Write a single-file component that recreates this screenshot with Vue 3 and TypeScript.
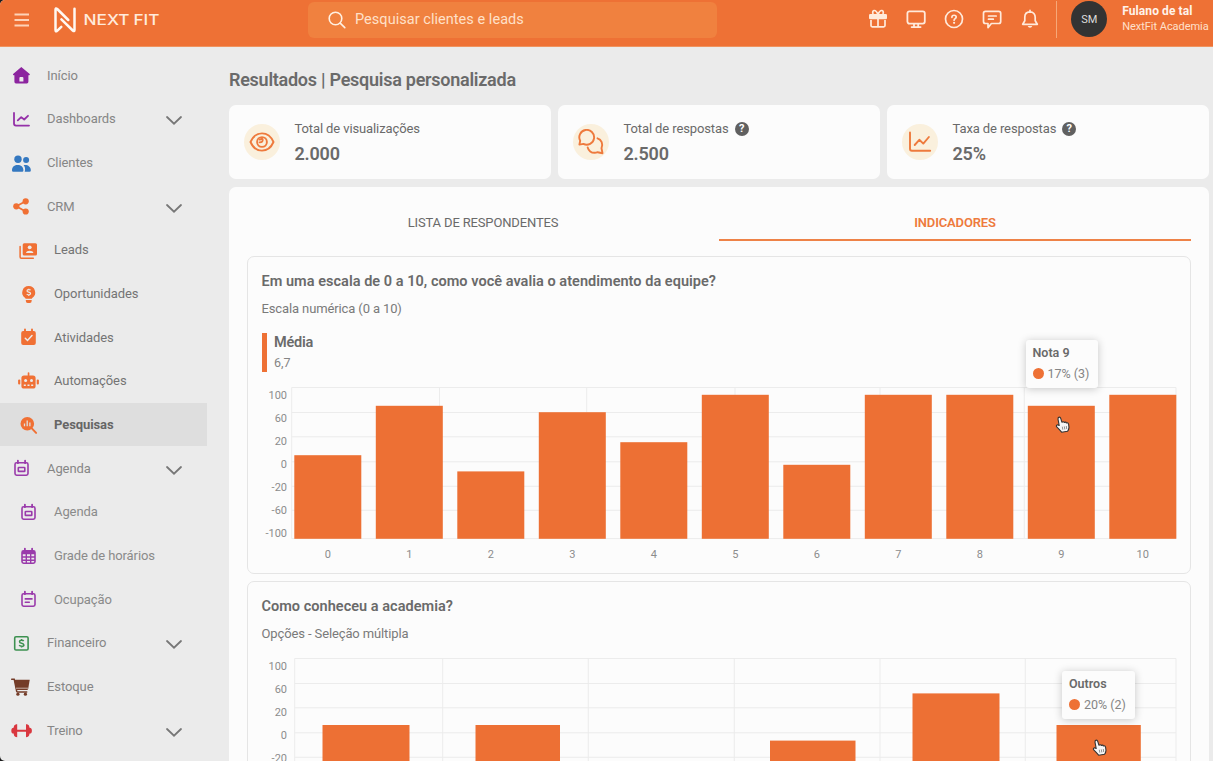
<script setup lang="ts">
interface NavItem {
  label: string
  icon: string
  color: string
  sub?: boolean
  expandable?: boolean
  active?: boolean
  dim?: boolean
}

const calendarFrame =
  '<rect x="6" y="6.8" width="13" height="12.4" rx="1.6" fill="none" stroke="currentColor" stroke-width="1.6"/><path d="M8.9 4.6v2.6M16.1 4.6v2.6" stroke="currentColor" stroke-width="1.8" stroke-linecap="round"/>'

const icons: Record<string, string> = {
  home: '<path fill="currentColor" fill-rule="evenodd" d="M12.3 4.1 20.7 11q.5.9-.5 1.2H19.4v6.6q0 1.6-1.6 1.6H7q-1.6 0-1.6-1.6v-6.6H4.6q-1-.3-.5-1.2ZM10.4 18.6h4v-3.6q0-1-1-1h-2q-1 0-1 1Z"/>',
  trend: '<path fill="none" stroke="currentColor" stroke-width="1.8" stroke-linecap="round" stroke-linejoin="round" d="M5 6v10.6q0 2 2 2h13M8.8 13.4l3.4-3.3 3 2.4L19 8.8"/>',
  users: '<g fill="currentColor"><circle cx="9" cy="8.2" r="3.7"/><circle cx="17.1" cy="9" r="3"/><path d="M3 19.2c0-3.600 2.600-5.300 5.700-5.300s5.700 1.700 5.700 5.300v.4q0 1.200-1.200 1.200H4.200q-1.200 0-1.200-1.200zM14.600 14.100c3.800-.8 7.200 1.400 7.200 5v.5q0 1.200-1.200 1.200h-4.900c.8-2.500.400-4.900-1.100-6.700z"/></g>',
  share: '<g fill="currentColor"><circle cx="7.300" cy="12.300" r="3.100"/><circle cx="16.700" cy="7.300" r="3.100"/><circle cx="16.700" cy="17.500" r="3.100"/><path d="M16.700 7.300 7.300 12.300l9.400 5.200" fill="none" stroke="currentColor" stroke-width="1.800"/></g>',
  leads: '<rect x="6.700" y="5.200" width="14.300" height="12.400" rx="1.500" fill="currentColor"/><path d="M4.100 8.600v10.400q0 1.200 1.200 1.200h12" fill="none" stroke="currentColor" stroke-width="1.500" stroke-linecap="round"/><circle cx="13.700" cy="9.300" r="1.900" fill="#ebebeb"/><path d="M10 14.900c.2-3 7.200-3 7.400 0z" fill="#ebebeb"/>',
  bulb: '<path fill="currentColor" d="M12.700 4.100a6.400 6.400 0 0 1 3.500 11.800q-.4.300-.4.900h-6.200q0-.6-.4-.9A6.400 6.400 0 0 1 12.700 4.100zM9.800 17.900h5.900v.9q0 2.300-1.900 2.300h-2.100q-1.900 0-1.900-2.300z"/><path d="M14.500 8.300c-.5-.9-3.500-1-3.500.6 0 1.700 3.600.9 3.600 2.700 0 1.700-3.200 1.500-3.800.4M12.800 6.700v1M12.800 12.900v1" fill="none" stroke="#ebebeb" stroke-width="1.200"/>',
  check: '<path d="M9 4.500v3M16 4.500v3" stroke="currentColor" stroke-width="1.900" stroke-linecap="round"/><rect x="5.200" y="5.900" width="14.600" height="14.100" rx="2" fill="currentColor"/><path d="m9.300 13.200 2.200 2.300 4.500-4.900" fill="none" stroke="#ebebeb" stroke-width="1.500" stroke-linecap="round"/>',
  robot: '<g fill="currentColor"><rect x="5.400" y="6.500" width="14.200" height="13" rx="2.600"/><rect x="11.700" y="3.200" width="1.700" height="4" rx=".8"/><rect x="2.100" y="10.600" width="2.200" height="5" rx="1"/><rect x="20.700" y="10.600" width="2.200" height="5" rx="1"/></g><g fill="#ebebeb"><circle cx="9.600" cy="11.400" r="1.500"/><circle cx="15.500" cy="11.400" r="1.500"/><path d="M7.800 15.400h2v1.500h-2zM11.500 15.400h2v1.500h-2zM15.200 15.400h2v1.500h-2z"/></g>',
  survey: '<circle cx="11.300" cy="10.700" r="6.800" fill="currentColor"/><path d="m15.800 15.400 4.300 4.500" stroke="currentColor" stroke-width="2" stroke-linecap="round"/><path d="M8.500 10.400v2.900M11.200 7.600v5.700M13.900 9.400v3.900" stroke="#dedede" stroke-width="1.300"/>',
  agenda: calendarFrame + '<rect x="9.300" y="11.500" width="6.500" height="3.900" rx=".5" fill="none" stroke="currentColor" stroke-width="1.600"/>',
  grid: calendarFrame + '<path d="M6 9.600h13M6 13h13M6 16.300h13M10.300 9.500v9.700M14.700 9.500v9.700" stroke="currentColor" stroke-width="1.400"/><path d="M6 8h13" stroke="currentColor" stroke-width="2.200"/>',
  notes: calendarFrame + '<path d="M9.300 11.900h6.700M9.300 15.300h4" stroke="currentColor" stroke-width="1.600" stroke-linecap="round"/>',
  money: '<rect x="5.700" y="5.700" width="13.400" height="13.300" rx="1.300" fill="none" stroke="currentColor" stroke-width="1.600"/><path d="M14.700 10.100c-.7-1.100-4.200-1.100-4.200.6 0 2.100 4.400 1 4.400 3.200 0 1.800-3.900 1.700-4.700.3M12.600 7.900v1.500M12.600 15v1.600" fill="none" stroke="currentColor" stroke-width="1.500"/>',
  cart: '<path d="M2.700 4.200h2.500l2.500 12.200q.2.700 1 .7h9" fill="none" stroke="currentColor" stroke-width="1.500" stroke-linecap="round"/><path d="M5.200 4.800h15.500l-1.500 9q-.2 1.200-1.300 1.200H7.300z" fill="currentColor"/><path d="M7 13.200h12" stroke="#c4aea5" stroke-width="1"/><circle cx="8.900" cy="19.200" r="1.600" fill="currentColor"/><circle cx="16.400" cy="19.200" r="1.600" fill="currentColor"/>',
  barbell: '<path d="M8.200 6.300C4.800 6.300 5 8.700 4.600 9.800q-2.300 0-2.300 2.900t2.300 2.900c.4 1.200.2 3.700 3.600 3.700zM17 6.300c3.400 0 3.200 2.400 3.600 3.500q2.300 0 2.300 2.900t-2.300 2.900c-.4 1.200-.2 3.700-3.600 3.700z" fill="currentColor"/><path d="M8 12.800h9.200" stroke="currentColor" stroke-width="2"/>',
  gift: '<g fill="none" stroke="currentColor" stroke-width="1.700"><path d="M5 13v5.600q0 1.300 1.300 1.300h11.400q1.300 0 1.300-1.300V13M12 8v12"/><path d="M12 7.500C9.500 1.200 5.400 3.400 7.100 7M12 7.500c2.500-6.300 6.600-4.100 4.900-.5"/></g><rect x="3" y="7" width="18" height="5.200" rx="1.300" fill="currentColor"/>',
  screen: '<g fill="none" stroke="currentColor" stroke-width="1.800" stroke-linecap="round"><rect x="3.400" y="4.300" width="17.400" height="12.300" rx="2"/><path d="M10 17v2.500M14.200 17v2.500M7.600 20.100h9"/></g>',
  help: '<circle cx="12" cy="12" r="8.500" fill="none" stroke="currentColor" stroke-width="1.700"/><path d="M9.900 10.300c0-2.800 4.300-2.600 4.300-.2 0 1.500-2.100 1.500-2.100 3.100" fill="none" stroke="currentColor" stroke-width="1.700" stroke-linecap="round"/><circle cx="12.100" cy="15.800" r="1.100" fill="currentColor"/>',
  chat: '<path d="M5.500 4.300h13.200q2 0 2 2v8.200q0 2-2 2h-7.300L8 20.600v-4.100H5.500q-2 0-2-2V6.300q0-2 2-2zM8.500 9h7.700M8.500 12.200h4.800" fill="none" stroke="currentColor" stroke-width="1.700" stroke-linecap="round" stroke-linejoin="round"/>',
  bell: '<path d="M12 3.300v1.500M12 4.900c-3.400 0-5.200 2.400-5.200 5.400v3.400L4.700 17.300h14.600l-2.100-3.600v-3.400c0-3-1.800-5.400-5.200-5.400z" fill="none" stroke="currentColor" stroke-width="1.700" stroke-linecap="round" stroke-linejoin="round"/><path d="M9.700 19.100h4.600q-.6 1.700-2.300 1.700t-2.300-1.700z" fill="currentColor"/>',
}

const nav: NavItem[] = [
  { label: 'Início', icon: 'home', color: '#8c259f' },
  { label: 'Dashboards', icon: 'trend', color: '#9430a8', expandable: true },
  { label: 'Clientes', icon: 'users', color: '#3478c0' },
  { label: 'CRM', icon: 'share', color: '#f07034', expandable: true },
  { label: 'Leads', icon: 'leads', color: '#f07034', sub: true },
  { label: 'Oportunidades', icon: 'bulb', color: '#f07034', sub: true },
  { label: 'Atividades', icon: 'check', color: '#f07034', sub: true },
  { label: 'Automações', icon: 'robot', color: '#f07034', sub: true },
  { label: 'Pesquisas', icon: 'survey', color: '#f07034', sub: true, active: true },
  { label: 'Agenda', icon: 'agenda', color: '#9a3bab', expandable: true },
  { label: 'Agenda', icon: 'agenda', color: '#9a3bab', sub: true, dim: true },
  { label: 'Grade de horários', icon: 'grid', color: '#9a3bab', sub: true, dim: true },
  { label: 'Ocupação', icon: 'notes', color: '#9a3bab', sub: true, dim: true },
  { label: 'Financeiro', icon: 'money', color: '#3d9150', expandable: true },
  { label: 'Estoque', icon: 'cart', color: '#743c28' },
  { label: 'Treino', icon: 'barbell', color: '#d9373f', expandable: true },
]

const tools = ['gift', 'screen', 'help', 'chat', 'bell']

const ticks = ['100', '60', '20', '0', '-20', '-60', '-100']
const tickY = (i: number) => 11.8 + i * 23.03

// Plot geometry, in chart units (1 unit = 1 px)
const rowLines = [0.5, 25.5, 49.8, 74.8, 99.3, 123.3, 151.6]
const scoreCols = [43.7, 191.5, 338.7, 487, 632, 776.3, 928]
const scoreHeights = [83.6, 133, 67.4, 126.6, 96.6, 144, 74, 144, 144, 133, 144]
const scoreX = (i: number) => 46.3 + i * 81.5

const sourceCols = [46.7, 194.7, 340.3, 486.3, 632, 777.3, 928]
const sourceBars = [
  { x: 74.5, w: 87, y: 67 },
  { x: 227.5, w: 84.5, y: 67 },
  { x: 522, w: 85.5, y: 82.6 },
  { x: 664.5, w: 87, y: 35.4 },
  { x: 808.5, w: 84.3, y: 67 },
]
</script>

<template>
  <div class="app">
    <header class="topbar">
      <svg class="burger" viewBox="0 0 16 14"><path d="M0.500 1.500h14.500M0.500 7h14.500M0.500 12.500h14.500" /></svg>
      <svg class="logo" viewBox="0 0 108 28">
        <path class="mark" d="M14.300 14 3.200 3Q1.500 1.600 1.500 3.800V24q0 2.200 1.600.8L7.300 20.800M7.400 13.300 18.800 24.500q1.700 1.500 1.700-.6V2.700" />
        <text x="29.500" y="18.800" textLength="46" lengthAdjust="spacingAndGlyphs">NEXT</text>
        <text x="79.500" y="18.800" textLength="26" lengthAdjust="spacingAndGlyphs">FIT</text>
      </svg>
      <div class="search">
        <svg viewBox="0 0 18 18"><circle cx="7.500" cy="7.500" r="6.300" /><path d="m12.200 12.200 4.600 4.400" /></svg>
        <span>Pesquisar clientes e leads</span>
      </div>
      <div class="tools">
        <svg v-for="t in tools" :key="t" viewBox="0 0 24 24" v-html="icons[t]"></svg>
      </div>
      <div class="account">
        <div class="avatar">SM</div>
        <div class="who">
          <strong>Fulano de tal</strong>
          <span>NextFit Academia</span>
        </div>
      </div>
    </header>

    <div class="body">
      <nav class="sidebar">
        <div
          v-for="(item, i) in nav"
          :key="i"
          class="item"
          :class="{ sub: item.sub, active: item.active, dim: item.dim }"
        >
          <svg class="ico" viewBox="0 0 24 24" :style="{ color: item.color }" v-html="icons[item.icon]"></svg>
          <span>{{ item.label }}</span>
          <svg v-if="item.expandable" class="chev" viewBox="0 0 16 9"><path d="m1 1 7 6.700L15 1" /></svg>
        </div>
      </nav>

      <main class="content">
        <h1>Resultados | Pesquisa personalizada</h1>

        <section class="stats">
          <article class="stat">
            <div class="disc">
              <svg viewBox="0 0 26 26">
                <path d="M1.500 13C6.500 1.500 19.500 1.500 24.500 13C19.500 24.500 6.500 24.500 1.500 13z" />
                <circle cx="13" cy="13" r="4.900" />
                <path d="M13.600 10.300q.6 3.200-3 3.100M10.800 10.600l2.300-1" />
              </svg>
            </div>
            <div class="info">
              <p>Total de visualizações</p>
              <b>2.000</b>
            </div>
          </article>
          <article class="stat">
            <div class="disc">
              <svg viewBox="0 0 26 26">
                <path d="M1.400 15.600 2.200 11.800A7.400 7.400 0 1 1 5.400 14.900z" />
                <path d="M19.500 9.300c3.900 1.200 5.900 5.600 4 9.900l1 5-4.900-1q-1.500.6-3 .6c-3.300 0-6-2.300-6.900-5.400" />
              </svg>
            </div>
            <div class="info">
              <p>Total de respostas <i>?</i></p>
              <b>2.500</b>
            </div>
          </article>
          <article class="stat">
            <div class="disc">
              <svg viewBox="0 0 26 26"><path d="M3 3.500v16.300q0 1.900 1.900 1.900h18.300M7.700 16l4.600-5.200 4 3.800 5.600-6.600" /></svg>
            </div>
            <div class="info">
              <p>Taxa de respostas <i>?</i></p>
              <b>25%</b>
            </div>
          </article>
        </section>

        <section class="panel">
          <div class="tabs">
            <div class="tab">LISTA DE RESPONDENTES</div>
            <div class="tab on">INDICADORES</div>
          </div>

          <article class="card scores">
            <h2>Em uma escala de 0 a 10, como você avalia o atendimento da equipe?</h2>
            <p class="kind">Escala numérica (0 a 10)</p>
            <div class="mean">
              <strong>Média</strong>
              <span>6,7</span>
            </div>
            <svg class="chart" width="942" height="177" viewBox="0 0 942 177">
              <path v-for="y in rowLines" :key="'r' + y" class="rule" :d="`M43.700 ${y}H928`" />
              <path v-for="x in scoreCols" :key="'c' + x" class="rule" :d="`M${x} .5V151.600`" />
              <text v-for="(t, i) in ticks" :key="t" class="tick y" x="39" :y="tickY(i)">{{ t }}</text>
              <g v-for="(h, i) in scoreHeights" :key="'b' + i">
                <rect class="bar" :x="scoreX(i)" :y="151.800 - h" width="67" :height="h" />
                <text class="tick x" :x="scoreX(i) + 33.500" y="170.700">{{ i }}</text>
              </g>
            </svg>
            <div class="tip nine">
              <strong>Nota 9</strong>
              <span>17% (3)</span>
            </div>
            <svg class="hand h9" viewBox="0 0 15 17">
              <path d="M4.200 9.500 3 3.200Q2.800 1.300 4.200 1.100 5.500 1 5.900 2.800L6.900 6.200Q8.600 5.200 9.300 6.400 10.700 5.600 11.400 6.900 13.200 6.400 13.600 8.300L14 11.400Q13.900 13.400 12.600 15.300L6.600 16.200Q4.600 13.800 1.500 10.700 1 9.100 2.400 8.700z" />
              <path class="fold" d="M7.300 10.700l.5 3M9.300 10.400l.5 3M11.300 10l.4 3" />
            </svg>
          </article>

          <article class="card sources">
            <h2>Como conheceu a academia?</h2>
            <p class="kind">Opções - Seleção múltipla</p>
            <svg class="chart" width="942" height="177" viewBox="0 0 942 177">
              <path v-for="y in rowLines" :key="'r' + y" class="rule" :d="`M46.700 ${y}H928`" />
              <path v-for="x in sourceCols" :key="'c' + x" class="rule" :d="`M${x} .5V151.600`" />
              <text v-for="(t, i) in ticks" :key="t" class="tick y" x="39" :y="tickY(i)">{{ t }}</text>
              <rect v-for="b in sourceBars" :key="b.x" class="bar" :x="b.x" :y="b.y" :width="b.w" :height="151.800 - b.y" />
            </svg>
            <div class="tip others">
              <strong>Outros</strong>
              <span>20% (2)</span>
            </div>
            <svg class="hand ho" viewBox="0 0 15 17">
              <path d="M4.200 9.500 3 3.200Q2.800 1.300 4.200 1.100 5.500 1 5.900 2.800L6.900 6.200Q8.600 5.200 9.300 6.400 10.700 5.600 11.400 6.900 13.200 6.400 13.600 8.300L14 11.400Q13.900 13.400 12.600 15.300L6.600 16.200Q4.600 13.800 1.500 10.700 1 9.100 2.400 8.700z" />
              <path class="fold" d="M7.300 10.700l.5 3M9.300 10.400l.5 3M11.300 10l.4 3" />
            </svg>
          </article>
        </section>
      </main>
    </div>
  </div>
</template>

<style>
html,
body {
  margin: 0;
  background: #1c1c1c;
  overflow: hidden;
}
</style>

<style scoped>
* {
  box-sizing: border-box;
}
.app {
  width: 1213px;
  height: 761px;
  overflow: hidden;
  display: flex;
  flex-direction: column;
  background: #ebebeb;
  border-radius: 5px 0 0 5px;
  font-family: Roboto, 'Liberation Sans', sans-serif;
  color: #6a6a6a;
}
h1,
h2,
p {
  margin: 0;
}

.topbar {
  flex: none;
  height: 47px;
  background: #ee7135;
  border-bottom: 1px solid #ef935f;
  display: flex;
  align-items: flex-start;
  color: #fff3ea;
}
.burger {
  width: 16px;
  height: 14px;
  margin: 12.500px 0 0 13.500px;
  fill: none;
  stroke: #fdd3b8;
  stroke-width: 1.900;
}
.logo {
  width: 108px;
  height: 28px;
  margin: 5.500px 0 0 24.500px;
}
.mark {
  fill: none;
  stroke: #fff8f2;
  stroke-width: 2.500;
  stroke-linecap: round;
  stroke-linejoin: round;
}
.logo text {
  font: 500 14.400px Inter, sans-serif;
  fill: #ffeadb;
}
.search {
  width: 409px;
  height: 36px;
  margin: 1.500px 0 0 146px;
  padding-left: 20px;
  border-radius: 6px;
  background: #f0813f;
  display: flex;
  align-items: center;
  font-size: 14.500px;
  letter-spacing: 0.040px;
  color: #ffe0c8;
}
.search svg {
  width: 18px;
  height: 18px;
  margin-right: 9px;
  fill: none;
  stroke: #fff0e2;
  stroke-width: 1.600;
  stroke-linecap: round;
}
.tools {
  display: flex;
  gap: 14.200px;
  margin: 7px 0 0 148.500px;
  color: #ffeadb;
}
.tools svg {
  width: 24px;
  height: 24px;
}
.account {
  display: flex;
  align-items: center;
  height: 36.500px;
  margin: 1px 0 0 14px;
  padding-left: 14px;
  border-left: 1px solid #f6a878;
}
.avatar {
  width: 36px;
  height: 36px;
  border-radius: 50%;
  background: #333;
  color: #dcdcdc;
  font-size: 11px;
  display: flex;
  align-items: center;
  justify-content: center;
}
.who {
  display: flex;
  flex-direction: column;
  margin-left: 15px;
  white-space: nowrap;
}
.who strong {
  font-size: 12px;
  line-height: 16px;
  letter-spacing: 0.080px;
  font-weight: 700;
}
.who span {
  font-size: 11px;
  line-height: 16px;
  letter-spacing: -0.040px;
  color: #ffe0cb;
}

.body {
  flex: 1;
  min-height: 0;
  display: flex;
}
.sidebar {
  width: 207px;
  flex: none;
  padding-top: 6.500px;
}
.item {
  height: 43.670px;
  display: flex;
  align-items: center;
  padding-left: 9px;
  font-size: 13px;
  letter-spacing: -0.090px;
  color: #868686;
}
.item.sub {
  padding-left: 16px;
  color: #747474;
}
.item.dim {
  color: #8a8a8a;
}
.item.active {
  background: #dedede;
  font-weight: 700;
  color: #666;
}
.ico {
  width: 24px;
  height: 24px;
  margin-right: 14px;
}
.chev {
  width: 16px;
  height: 9px;
  margin: 4px 25px 0 auto;
  fill: none;
  stroke: #777;
  stroke-width: 1.800;
  stroke-linecap: round;
}

.content {
  width: 980px;
  margin-left: 22px;
}
h1 {
  margin-top: 20.500px;
  font-size: 18px;
  line-height: 24px;
  font-weight: 600;
  letter-spacing: -0.260px;
  white-space: nowrap;
}
.stats {
  display: grid;
  grid-template-columns: repeat(3, 1fr);
  gap: 7px;
  margin-top: 13px;
}
.stat {
  height: 74px;
  border-radius: 7px;
  background: #fcfcfc;
  display: flex;
  align-items: center;
  padding-left: 15px;
}
.disc {
  width: 36px;
  height: 36px;
  border-radius: 50%;
  background: #faf0dd;
  display: flex;
  align-items: center;
  justify-content: center;
}
.disc svg {
  width: 26px;
  height: 26px;
  fill: none;
  stroke: #ee7a3d;
  stroke-width: 1.900;
  stroke-linecap: round;
  stroke-linejoin: round;
}
.info {
  margin-left: 14.500px;
  padding-top: 2px;
}
.info p {
  display: flex;
  align-items: center;
  font-size: 13px;
  line-height: 18px;
  letter-spacing: -0.110px;
}
.info p i {
  width: 14px;
  height: 14px;
  margin-left: 6px;
  border-radius: 50%;
  background: #606060;
  color: #fff;
  font: 700 11px/14px Roboto, sans-serif;
  text-align: center;
}
.info b {
  display: block;
  margin-top: 5px;
  font-size: 18px;
  line-height: 22px;
  font-weight: 600;
  letter-spacing: -0.200px;
}

.panel {
  margin-top: 8px;
  height: 590px;
  padding: 0 18px;
  border-radius: 7px;
  background: #fcfcfc;
}
.tabs {
  display: flex;
  height: 54.500px;
}
.tab {
  flex: 1;
  display: flex;
  align-items: center;
  justify-content: center;
  padding-top: 19px;
  font-size: 13px;
  letter-spacing: -0.150px;
  border-bottom: 2px solid transparent;
}
.tab.on {
  color: #ee7a3d;
  font-weight: 600;
  border-color: #ee8247;
}
.card {
  position: relative;
  border: 1px solid #e5e5e5;
  border-radius: 7px;
  white-space: nowrap;
}
.scores {
  height: 318px;
  margin-top: 14.500px;
}
.sources {
  height: 300px;
  margin-top: 7.500px;
}
h2 {
  margin: 15px 0 0 13.500px;
  font-size: 14.500px;
  line-height: 20px;
  font-weight: 600;
  letter-spacing: 0.030px;
}
.kind {
  margin: 8px 0 0 13.500px;
  font-size: 13px;
  line-height: 18px;
  letter-spacing: -0.120px;
  color: #7a7a7a;
}
.mean {
  height: 39px;
  margin: 15.500px 0 0 13.500px;
  padding-left: 7.500px;
  border-left: 5.500px solid #ee7135;
  display: flex;
  flex-direction: column;
}
.mean strong {
  font-size: 14.500px;
  line-height: 20px;
  font-weight: 600;
  letter-spacing: -0.200px;
}
.mean span {
  font-size: 12.500px;
  line-height: 20px;
  color: #858585;
}
.chart {
  display: block;
  margin-top: 14.500px;
}
.rule {
  fill: none;
  stroke: #ececec;
}
.bar {
  fill: #ed7034;
}
.tick {
  font-size: 11px;
  fill: #8c8c8c;
}
.tick.y {
  text-anchor: end;
}
.tick.x {
  text-anchor: middle;
}
.tip {
  position: absolute;
  width: 72.500px;
  height: 48px;
  padding: 4px 0 0 7px;
  border-radius: 3px;
  background: #fcfcfc;
  box-shadow: 0 1px 8px rgba(0, 0, 0, 0.22);
  display: flex;
  flex-direction: column;
}
.tip strong {
  font-size: 12.500px;
  line-height: 18px;
  font-weight: 600;
}
.tip span {
  display: flex;
  align-items: center;
  font-size: 12.500px;
  line-height: 24px;
  color: #858585;
}
.tip span::before {
  content: '';
  width: 11px;
  height: 11px;
  margin-right: 4px;
  border-radius: 50%;
  background: #ee7135;
}
.nine {
  left: 777.500px;
  top: 83px;
}
.others {
  left: 814px;
  top: 88.500px;
}
.hand {
  position: absolute;
  width: 15px;
  height: 17px;
  fill: #f6f6f6;
  stroke: #333;
  stroke-width: 1.100;
  stroke-linejoin: round;
}
.fold {
  stroke: #666;
  stroke-width: 0.700;
}
.h9 {
  left: 807px;
  top: 159px;
}
.ho {
  left: 843.500px;
  top: 156.500px;
}
</style>
